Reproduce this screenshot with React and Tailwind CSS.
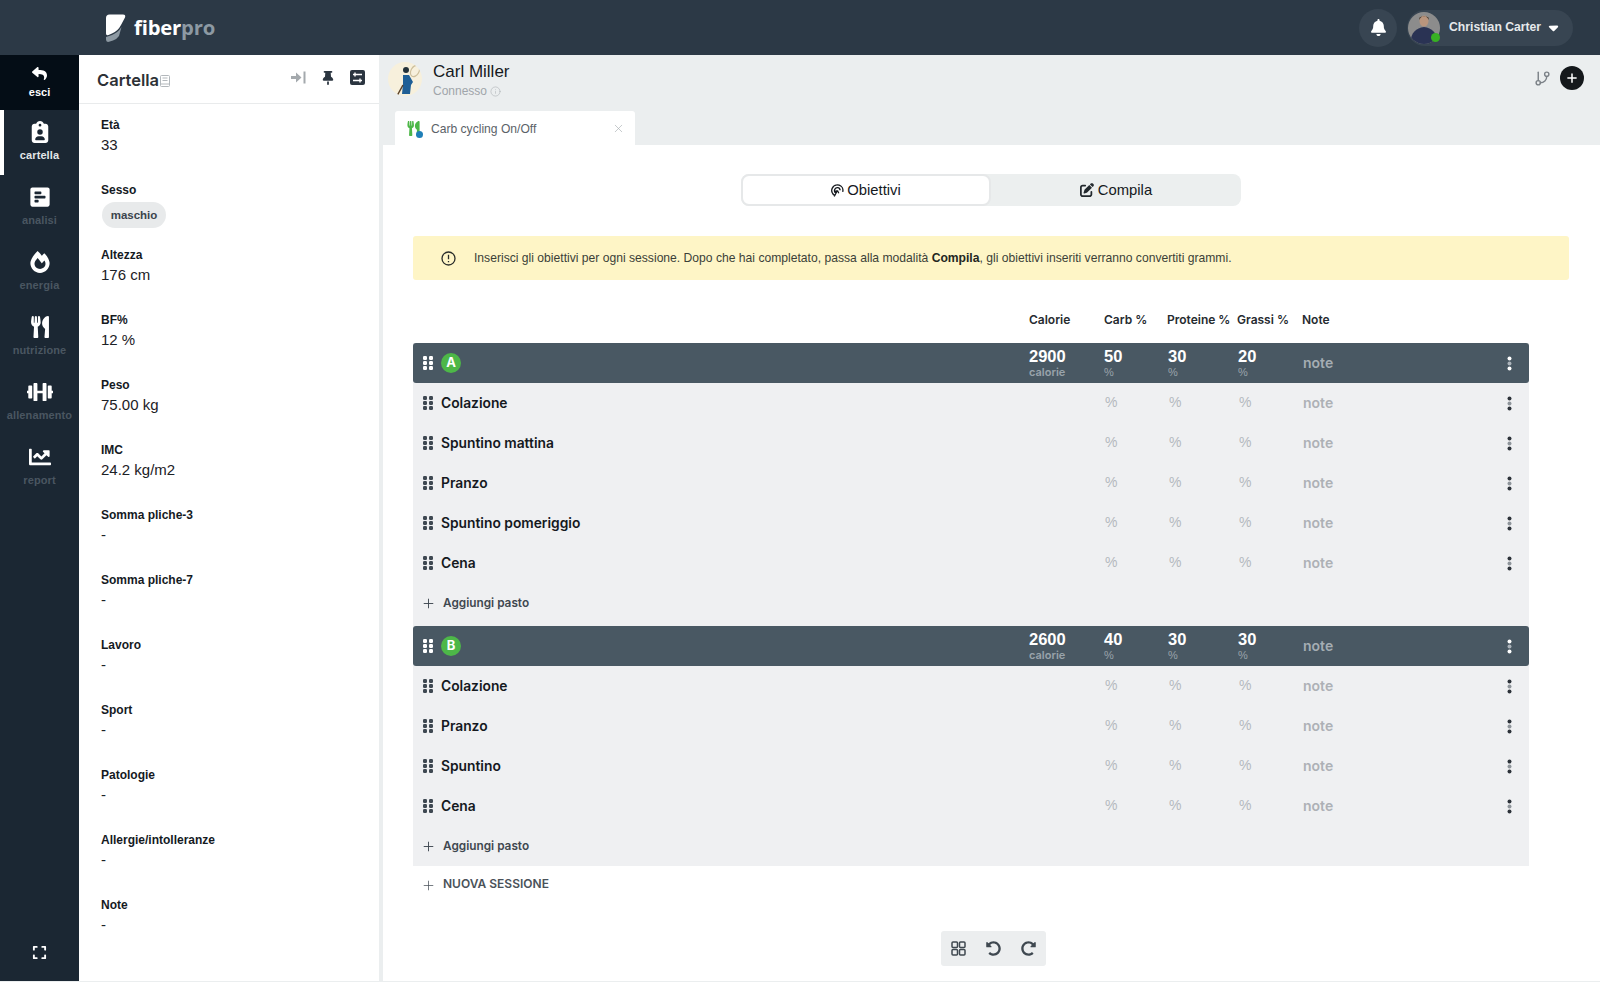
import React from "react";
import { FaClipboardUser, FaExpand, FaBell, FaCaretDown, FaThumbtack, FaPenToSquare, FaPlus } from "react-icons/fa6";
import { FaReply, FaPollH, FaFireAlt, FaUtensils, FaDumbbell, FaChartLine, FaUndoAlt, FaRedoAlt } from "react-icons/fa";
import { GitBranch, Info, X, Plus } from "lucide-react";

const sans = "font-['Liberation_Sans',Arial,sans-serif]";
const inter = "font-['Inter',sans-serif]";

function NavItem({ icon, label, cls = "text-[#4a5661]", extra = "" }) {
  return (
    <div className={`h-[65px] flex flex-col items-center pt-[11px] ${extra}`}>
      <div className="h-[22px] flex items-center justify-center text-white text-[22px]">{icon}</div>
      <div className="mt-[5px] text-[11px] leading-[14px] font-semibold tracking-[0.1px]">
        <span className={cls}>{label}</span>
      </div>
    </div>
  );
}

function Grip({ color = "#3e4852" }) {
  return (
    <svg width="10" height="14" viewBox="0 0 10 14" className="shrink-0">
      {[0, 5, 10].map((y) => (
        <g key={y} fill={color}>
          <rect x="0" y={y} width="4" height="4" rx="1.200" />
          <rect x="6" y={y} width="4" height="4" rx="1.200" />
        </g>
      ))}
    </svg>
  );
}

function Dots({ dark }) {
  const a = dark ? "#ffffff" : "#2d333a";
  const b = dark ? "#aab2b9" : "#8f959b";
  return (
    <svg width="5" height="15" viewBox="0 0 5 15">
      <circle cx="2.500" cy="2.500" r="2" fill={a} />
      <circle cx="2.500" cy="7.500" r="2" fill={b} />
      <circle cx="2.500" cy="12.500" r="2" fill={a} />
    </svg>
  );
}

const grid = "grid grid-cols-[616px_75px_63px_70px_65px_1fr] items-center";

function Field({ label, value, chip }) {
  return (
    <div className="h-[65px] pl-[22px]">
      <div className="text-[12px] leading-[16px] font-bold text-[#151a1f]">{label}</div>
      {chip ? (
        <div className="mt-[4px] ml-[1px] w-[64px] h-[26px] pt-[1px] rounded-full bg-[#e8eaeb] flex items-center justify-center text-[11.5px] font-bold text-[#3b444c]">{chip}</div>
      ) : (
        <div className="mt-[2px] text-[15px] leading-[20px] text-[#1c2126]">{value}</div>
      )}
    </div>
  );
}

function SessionRow({ letter, cal, c, p, g }) {
  return (
    <div className={`${grid} h-[40px] bg-[#495863] rounded-[3px] text-white`}>
      <div className="flex items-center pl-[10px]">
        <Grip color="#ffffff" />
        <div className={`ml-[8px] w-[20px] h-[20px] rounded-full bg-[#4db748] flex items-center justify-center text-[13px] font-bold ${inter}`}>{letter}</div>
      </div>
      {[[cal, "calorie"], [c, "%"], [p, "%"], [g, "%"]].map(([v, u], i) => (
        <div key={i} className={`flex flex-col -mt-[1px] ${i < 2 ? "" : "pl-[1px]"}`}>
          <span className={`${sans} text-[16.5px] leading-[18px] font-bold`}>{v}</span>
          <span className={`${i === 0 ? inter + " font-semibold pt-[1px]" : sans + " pt-[1px]"} text-[11px] leading-[13px] text-[#99a3ab]`}>{u}</span>
        </div>
      ))}
      <div className="flex items-center justify-between pr-[17px]">
        <span className={`${inter} pl-[1px] -mt-[2px] text-[14px] font-semibold text-[#a5adb3]`}>note</span>
        <Dots dark />
      </div>
    </div>
  );
}

function MealRow({ name }) {
  return (
    <div className={`${grid} h-[40px]`}>
      <div className="flex items-center pl-[10px]">
        <Grip />
        <span className={`${inter} ml-[8px] text-[13.8px] font-semibold text-[#15191e]`}>{name}</span>
      </div>
      <div />
      <div className={`${sans} pl-[1px] -mt-[2px] text-[14px] text-[#b4b9be]`}>%</div>
      <div className={`${sans} pl-[2px] -mt-[2px] text-[14px] text-[#b4b9be]`}>%</div>
      <div className={`${sans} pl-[2px] -mt-[2px] text-[14px] text-[#b4b9be]`}>%</div>
      <div className="flex items-center justify-between pr-[17px]">
        <span className={`${inter} pl-[1px] -mt-[2px] text-[14px] font-semibold text-[#adb1b6]`}>note</span>
        <Dots />
      </div>
    </div>
  );
}

function AddMeal({ h }) {
  return (
    <div className={`${h} flex items-start pt-[13px] pl-[8px] text-[#3f4850]`}>
      <Plus size={15} strokeWidth={1.500} className="shrink-0" />
      <span className={`${inter} ml-[7px] text-[11.8px] leading-[15px] font-semibold`}>Aggiungi pasto</span>
    </div>
  );
}

function Session({ letter, cal, c, p, g, meals, addH }) {
  return (
    <div className="bg-[#eff0f2] w-[1116px]">
      <SessionRow letter={letter} cal={cal} c={c} p={p} g={g} />
      {meals.map((m) => (
        <MealRow key={m} name={m} />
      ))}
      <AddMeal h={addH} />
    </div>
  );
}

function Logo() {
  return (
    <svg width="21" height="28" viewBox="0 0 21 28">
      <path d="M1 4 Q1 .5 4.500 .5 L18 .5 Q21 .5 20 3.500 L16 11 Q13 17 7 19.500 L3.500 21 Q1 22 1 19.500 Z" fill="#fff" />
      <path d="M1 23 L7 21 Q13 18.500 16.500 13 L14 22 Q12 25 8 26.500 L4 27.800 Q1 28.500 1 25.500 Z" fill="#8d99a3" />
    </svg>
  );
}

function Target() {
  return (
    <svg width="13" height="13" viewBox="0 0 14 14" fill="none" stroke="#15191e" strokeWidth="1.500" className="shrink-0">
      <path d="M4 12.200 A6 6 0 1 1 12.600 8.500" />
      <path d="M5.500 9.600 A3 3 0 1 1 9.800 6.800" />
      <path d="M7 7 L3.500 13.500 M7 7 L4 8.200 M7 7 L8.400 10" strokeWidth="1.300" />
    </svg>
  );
}

function App() {
  return (
    <div className={`${sans} w-[1600px] h-[982px] overflow-hidden bg-[#ebeeef] flex flex-col`}>
      {/* top bar */}
      <header className="h-[55px] shrink-0 bg-[#2c3946] flex items-center pl-[105px] pr-[27px]">
        <Logo />
        <div className="ml-[8px] text-[20.3px] leading-none font-bold font-['Open_Sans',sans-serif] tracking-[-0.2px]">
          <span className="text-white">fiber</span>
          <span className="text-[#8d99a3]">pro</span>
        </div>
        <div className="ml-auto w-[38px] h-[38px] rounded-full bg-[#384552] flex items-center justify-center text-white text-[17px]">
          <FaBell />
        </div>
        <div className="ml-[10px] w-[166px] h-[36px] rounded-full bg-[#384552] flex items-center">
          <div className="relative w-[32px] h-[32px] ml-[1px]">
            <svg width="32" height="32" viewBox="0 0 32 32" className="rounded-full">
              <rect width="32" height="32" fill="#8c8c8c" />
              <path d="M2 32 C3 20 8 16 16 15 C24 16 29 20 30 32 Z" fill="#2a3354" />
              <ellipse cx="16" cy="9" rx="4.500" ry="5.500" fill="#b9957d" />
              <path d="M11 8 Q16 0 21 8 L20.500 5.500 Q16 3 11.500 5.500 Z" fill="#4a3a2c" />
            </svg>
            <span className="absolute right-0 bottom-[2px] w-[9px] h-[9px] rounded-full bg-[#37b024]" />
          </div>
          <span className="ml-[9px] text-[12.2px] font-bold text-[#e6e9eb]">Christian Carter</span>
          <FaCaretDown className="ml-[5px] text-white text-[15px]" />
        </div>
      </header>

      <div className="flex h-[926px] shrink-0">
        {/* sidebar */}
        <nav className="w-[79px] shrink-0 bg-[#1b2733] flex flex-col">
          <div className="h-[55px] bg-[#040d16] flex flex-col items-center pt-[11px]">
            <FaReply className="text-white text-[15px]" />
            <div className="mt-[4px] text-[11px] leading-[14px] font-bold text-white">esci</div>
          </div>
          <NavItem icon={<FaClipboardUser />} label="cartella" cls="text-[#e3e6e8]" extra="border-l-[4px] border-white pr-[4px]" />
          <NavItem icon={<FaPollH />} label="analisi" />
          <NavItem icon={<FaFireAlt />} label="energia" />
          <NavItem icon={<FaUtensils />} label="nutrizione" />
          <NavItem icon={<FaDumbbell className="text-[26px]" />} label="allenamento" />
          <NavItem icon={<FaChartLine />} label="report" />
          <div className="mt-auto h-[42px] flex justify-center pt-[6px] text-white text-[15px]">
            <FaExpand />
          </div>
        </nav>

        {/* chart panel */}
        <aside className="w-[300px] shrink-0 bg-white flex flex-col">
          <div className="h-[49px] shrink-0 border-b border-[#e9ebec] flex items-center pl-[18px] pr-[14px]">
            <span className={`${inter} mt-[2px] text-[16.5px] font-semibold text-[#2d3136]`}>Cartella</span>
            <svg width="10" height="12" viewBox="0 0 10 12" fill="none" stroke="#b3b8bc" className="ml-[1px] mt-[4px]">
              <rect x=".5" y=".5" width="9" height="11" rx="1" />
              <path d="M2.500 3h5M2.500 5.500h5" />
              <path d="M.5 9h9" />
            </svg>
            <svg width="15" height="13" viewBox="0 0 15 13" className="ml-auto mb-[3px] mr-[15px]" fill="#a4a9ad">
              <path d="M0 5h5V1.500L10.500 6.500 5 11.500V8H0z" />
              <rect x="12.500" y="0.500" width="2" height="12" />
            </svg>
            <FaThumbtack className="text-[#2b3540] text-[14px] mb-[3px] mr-[15px]" />
            <svg width="15" height="15" viewBox="0 0 15 15" className="mb-[3px]">
              <rect width="15" height="15" rx="2" fill="#2b3540" />
              <path d="M3 4.500h9M3 10.500h9" stroke="#fff" strokeWidth="1.400" />
              <path d="M5 2.500v4M10 8.500v4" stroke="#fff" strokeWidth="1.400" />
            </svg>
          </div>
          <div className="pt-[13px]">
            <Field label="Età" value="33" />
            <Field label="Sesso" chip="maschio" />
            <Field label="Altezza" value="176 cm" />
            <Field label="BF%" value="12 %" />
            <Field label="Peso" value="75.00 kg" />
            <Field label="IMC" value="24.2 kg/m2" />
            <Field label="Somma pliche-3" value="-" />
            <Field label="Somma pliche-7" value="-" />
            <Field label="Lavoro" value="-" />
            <Field label="Sport" value="-" />
            <Field label="Patologie" value="-" />
            <Field label="Allergie/intolleranze" value="-" />
            <Field label="Note" value="-" />
          </div>
        </aside>

        {/* main */}
        <main className="ml-[4px] flex-1 flex flex-col min-w-0">
          <div className="h-[56px] shrink-0 flex items-start pt-[7px] pl-[5px] pr-[16px]">
            <svg width="34" height="34" viewBox="0 0 34 34" className="rounded-full">
              <rect width="34" height="34" fill="#f7f0dc" />
              <ellipse cx="27" cy="9" rx="4" ry="6" transform="rotate(30 27 9)" fill="none" stroke="#cdbf9c" strokeWidth="1.200" />
              <path d="M15 13 h6 l4 7 -2 3 -1 9 H14 l1 -10 z" fill="#1f5f96" />
              <circle cx="18" cy="8" r="3" fill="#23313a" />
              <path d="M15 23 L9.500 33" stroke="#5a4028" strokeWidth="1.500" />
            </svg>
            <div className="ml-[11px] -mt-[1px]">
              <div className="text-[17px] leading-[22px] text-[#15191d]">Carl Miller</div>
              <div className="text-[12px] leading-[16px] text-[#a0a5aa] flex items-center">
                Connesso
                <Info size={11} strokeWidth={1.200} className="ml-[3px] text-[#a9aeb2]" />
              </div>
            </div>
            <GitBranch size={17} strokeWidth={2} className="ml-auto mr-[9px] mt-[8px] text-[#7b8187]" />
            <div className="w-[24px] h-[24px] mt-[4px] rounded-full bg-[#14181b] flex items-center justify-center text-white text-[12px]">
              <FaPlus />
            </div>
          </div>

          <div className="h-[34px] shrink-0 pl-[12px]">
            <div className="w-[240px] h-[34px] bg-white rounded-t-[3px] flex items-center pl-[11px] pr-[10px]">
              <span className="relative text-[#4db748] text-[15px]">
                <FaUtensils />
                <span className="absolute right-[-2px] bottom-[-2px] w-[7px] h-[7px] rounded-full bg-[#1f7fb8]" />
              </span>
              <span className="ml-[10px] mt-[3px] text-[12.1px] text-[#5b6268]">Carb cycling On/Off</span>
              <X size={13} strokeWidth={1.200} className="ml-auto text-[#a9aeb2]" />
            </div>
          </div>

          <div className="h-[836px] shrink-0 bg-white">
            <div className="pt-[29px] flex justify-center pr-[1px]">
              <div className="w-[500px] h-[32px] rounded-[8px] bg-[#ecefef] flex">
                <div className="w-[250px] h-[32px] rounded-[8px] bg-white border-2 border-[#e6e8e9] flex items-center justify-center gap-[3px] text-[14.800px] text-[#15191d]">
                  <Target />
                  Obiettivi
                </div>
                <div className="flex-1 flex items-center justify-center gap-[4px] text-[14.800px] text-[#15191d]">
                  <FaPenToSquare className="text-[14px] text-[#23292e]" />
                  Compila
                </div>
              </div>
            </div>

            <div className="ml-[30px] mt-[30px] w-[1156px] h-[44px] rounded-[3px] bg-[#fef5c6] flex items-center pl-[28px] text-[12.13px] text-[#3b3f38]">
              <svg width="15" height="15" viewBox="0 0 15 15" fill="none" stroke="#2a2d2a" strokeWidth="1.300" className="shrink-0">
                <circle cx="7.500" cy="7.500" r="6.500" />
                <path d="M7.500 3.800v4.400M7.500 10v1.300" />
              </svg>
              <span className="ml-[18px]">
                Inserisci gli obiettivi per ogni sessione. Dopo che hai completato, passa alla modalità <b className="text-[#23261f]">Compila</b>, gli obiettivi inseriti verranno convertiti grammi.
              </span>
            </div>

            <div className="ml-[30px] mt-[23px] w-[1116px]">
              <div className={`${grid} h-[40px] ${inter} text-[12px] font-semibold text-[#262b30] pb-[7px]`}>
                <div />
                <div>Calorie</div>
                <div>Carb %</div>
                <div>Proteine %</div>
                <div>Grassi %</div>
                <div>Note</div>
              </div>
              <Session letter="A" cal="2900" c="50" p="30" g="20" addH="h-[43px]" meals={["Colazione", "Spuntino mattina", "Pranzo", "Spuntino pomeriggio", "Cena"]} />
              <Session letter="B" cal="2600" c="40" p="30" g="30" addH="h-[40px]" meals={["Colazione", "Pranzo", "Spuntino", "Cena"]} />
              <div className="h-[36px] flex items-center pl-[8px] text-[#4a5259]">
                <Plus size={15} strokeWidth={1.200} className="shrink-0 mt-[3px]" />
                <span className={`${inter} ml-[7px] text-[12px] font-semibold`}>NUOVA SESSIONE</span>
              </div>
            </div>

            <div className="ml-[558px] mt-[29px] w-[105px] h-[35px] rounded-[3px] bg-[#eceeef] flex items-center justify-between px-[10px] text-[#3f4850] text-[15px]">
              <svg width="15" height="15" viewBox="0 0 15 15" fill="none" stroke="#3f4850" strokeWidth="1.500">
                <rect x="1" y="1" width="5.500" height="5.500" rx="1" />
                <rect x="8.500" y="1" width="5.500" height="5.500" rx="1" />
                <rect x="1" y="8.500" width="5.500" height="5.500" rx="1" />
                <rect x="8.500" y="8.500" width="5.500" height="5.500" rx="1" />
              </svg>
              <FaUndoAlt />
              <FaRedoAlt />
            </div>
          </div>
        </main>
      </div>
    </div>
  );
}

export default App;
